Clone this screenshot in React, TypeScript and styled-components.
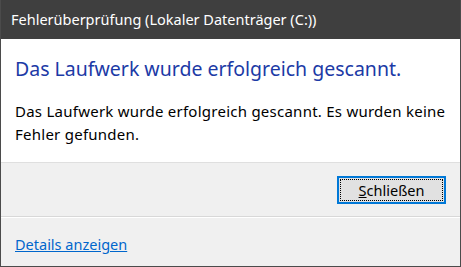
import styled, { createGlobalStyle } from 'styled-components';

const GlobalStyle = createGlobalStyle`
  html, body {
    margin: 0;
    padding: 0;
    background: #ffffff;
  }
  body {
    font-family: "Noto Sans", "Open Sans", sans-serif;
  }
`;

const App = () => {
  return (
    <>
      <GlobalStyle />
      <Window>
        <TitleBar>Fehlerüberprüfung (Lokaler Datenträger (C:))</TitleBar>
        <Content>
          <Heading>Das Laufwerk wurde erfolgreich gescannt.</Heading>
          <Message>
            Das Laufwerk wurde erfolgreich gescannt. Es wurden keine
            <br />
            Fehler gefunden.
          </Message>
        </Content>
        <ButtonBar>
          <CloseButton>
            <span className="focus">
              <u>S</u>chließen
            </span>
          </CloseButton>
        </ButtonBar>
        <Footer>
          <DetailsLink href="#">Details anzeigen</DetailsLink>
        </Footer>
      </Window>
    </>
  );
};

export default App;

const Window = styled.div`
  width: 461px;
  height: 267px;
  box-sizing: border-box;
  display: flex;
  flex-direction: column;
  border: 1px solid #4b4b4b;
  border-top: none;
  background: #f0f0f0;
  overflow: hidden;
`;

const TitleBar = styled.div`
  height: 39px;
  flex-shrink: 0;
  box-sizing: border-box;
  padding: 0 0 1px 10px;
  display: flex;
  align-items: center;
  background: #3f3f3f;
  color: #ffffff;
  font-size: 14.5px;
`;

const Content = styled.div`
  height: 124px;
  flex-shrink: 0;
  box-sizing: border-box;
  padding: 16px 4px 0 14px;
  background: #ffffff;
  border-bottom: 1px solid #dfdfdf;
`;

const Heading = styled.h1`
  margin: 0;
  font-size: 19.5px;
  font-weight: normal;
  line-height: 28px;
  color: #1c3aa6;
`;

const Message = styled.p`
  margin: 17px 0 0 0;
  font-size: 15px;
  line-height: 23px;
  color: #000000;
  letter-spacing: 0.25px;
  white-space: nowrap;
`;

const ButtonBar = styled.div`
  height: 54px;
  flex-shrink: 0;
  box-sizing: border-box;
  display: flex;
  justify-content: flex-end;
  align-items: flex-start;
  padding: 13px 14px 0 0;
  border-bottom: 1px solid #d8d8d8;
`;

const CloseButton = styled.button`
  width: 109px;
  height: 28px;
  box-sizing: border-box;
  padding: 1px;
  border: 2px solid #0078d7;
  background: #e1e1e1;
  font-family: inherit;
  font-size: 14.5px;
  color: #000000;
  cursor: pointer;

  .focus {
    display: flex;
    align-items: center;
    justify-content: center;
    height: 100%;
    box-sizing: border-box;
    border: 1px dotted #000000;
  }
`;

const Footer = styled.div`
  flex: 1;
  border-top: 1px solid #ffffff;
  padding: 15px 14px 0 14px;
`;

const DetailsLink = styled.a`
  font-size: 14.5px;
  color: #0066cc;
  text-decoration: underline;
`;
